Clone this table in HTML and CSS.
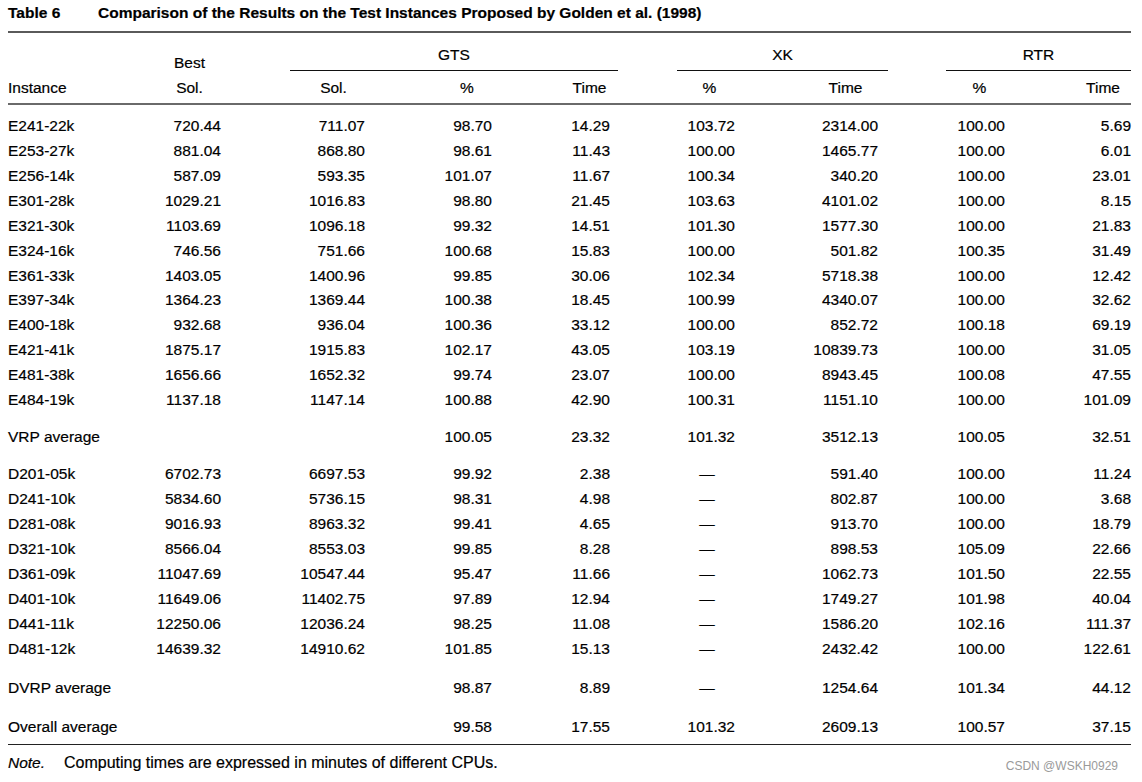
FILE: index.html
```html
<!DOCTYPE html>
<html lang="en">
<head>
<meta charset="utf-8">
<title>Table 6</title>
<link rel="stylesheet" href="styles.css">
</head>
<body>
<div class="page">
  <div class="title">
    <span class="title-label">Table 6</span>
    <span class="title-text">Comparison of the Results on the Test Instances Proposed by Golden et al. (1998)</span>
  </div>
  <div class="rule-top"></div>

  <div class="head">
    <div class="h-inst">Instance</div>
    <div class="h-best c2">Best<br>Sol.</div>
    <div class="group g-gts">GTS</div>
    <div class="group g-xk">XK</div>
    <div class="group g-rtr">RTR</div>
    <div class="sub c3">Sol.</div>
    <div class="sub c4 nudge">%</div>
    <div class="sub c5 nudge">Time</div>
    <div class="sub c6 nudge">%</div>
    <div class="sub c7">Time</div>
    <div class="sub c8 nudge">%</div>
    <div class="sub c9">Time</div>
  </div>
  <div class="rule-mid"></div>

  <div class="section first">
    <div class="row"><span>E241-22k</span><span>720.44</span><span>711.07</span><span>98.70</span><span>14.29</span><span>103.72</span><span>2314.00</span><span>100.00</span><span>5.69</span></div>
    <div class="row"><span>E253-27k</span><span>881.04</span><span>868.80</span><span>98.61</span><span>11.43</span><span>100.00</span><span>1465.77</span><span>100.00</span><span>6.01</span></div>
    <div class="row"><span>E256-14k</span><span>587.09</span><span>593.35</span><span>101.07</span><span>11.67</span><span>100.34</span><span>340.20</span><span>100.00</span><span>23.01</span></div>
    <div class="row"><span>E301-28k</span><span>1029.21</span><span>1016.83</span><span>98.80</span><span>21.45</span><span>103.63</span><span>4101.02</span><span>100.00</span><span>8.15</span></div>
    <div class="row"><span>E321-30k</span><span>1103.69</span><span>1096.18</span><span>99.32</span><span>14.51</span><span>101.30</span><span>1577.30</span><span>100.00</span><span>21.83</span></div>
    <div class="row"><span>E324-16k</span><span>746.56</span><span>751.66</span><span>100.68</span><span>15.83</span><span>100.00</span><span>501.82</span><span>100.35</span><span>31.49</span></div>
    <div class="row"><span>E361-33k</span><span>1403.05</span><span>1400.96</span><span>99.85</span><span>30.06</span><span>102.34</span><span>5718.38</span><span>100.00</span><span>12.42</span></div>
    <div class="row"><span>E397-34k</span><span>1364.23</span><span>1369.44</span><span>100.38</span><span>18.45</span><span>100.99</span><span>4340.07</span><span>100.00</span><span>32.62</span></div>
    <div class="row"><span>E400-18k</span><span>932.68</span><span>936.04</span><span>100.36</span><span>33.12</span><span>100.00</span><span>852.72</span><span>100.18</span><span>69.19</span></div>
    <div class="row"><span>E421-41k</span><span>1875.17</span><span>1915.83</span><span>102.17</span><span>43.05</span><span>103.19</span><span>10839.73</span><span>100.00</span><span>31.05</span></div>
    <div class="row"><span>E481-38k</span><span>1656.66</span><span>1652.32</span><span>99.74</span><span>23.07</span><span>100.00</span><span>8943.45</span><span>100.08</span><span>47.55</span></div>
    <div class="row"><span>E484-19k</span><span>1137.18</span><span>1147.14</span><span>100.88</span><span>42.90</span><span>100.31</span><span>1151.10</span><span>100.00</span><span>101.09</span></div>
  </div>

  <div class="section gap-a">
    <div class="row"><span>VRP average</span><span></span><span></span><span>100.05</span><span>23.32</span><span>101.32</span><span>3512.13</span><span>100.05</span><span>32.51</span></div>
  </div>

  <div class="section gap-a">
    <div class="row"><span>D201-05k</span><span>6702.73</span><span>6697.53</span><span>99.92</span><span>2.38</span><span class="dash">—</span><span>591.40</span><span>100.00</span><span>11.24</span></div>
    <div class="row"><span>D241-10k</span><span>5834.60</span><span>5736.15</span><span>98.31</span><span>4.98</span><span class="dash">—</span><span>802.87</span><span>100.00</span><span>3.68</span></div>
    <div class="row"><span>D281-08k</span><span>9016.93</span><span>8963.32</span><span>99.41</span><span>4.65</span><span class="dash">—</span><span>913.70</span><span>100.00</span><span>18.79</span></div>
    <div class="row"><span>D321-10k</span><span>8566.04</span><span>8553.03</span><span>99.85</span><span>8.28</span><span class="dash">—</span><span>898.53</span><span>105.09</span><span>22.66</span></div>
    <div class="row"><span>D361-09k</span><span>11047.69</span><span>10547.44</span><span>95.47</span><span>11.66</span><span class="dash">—</span><span>1062.73</span><span>101.50</span><span>22.55</span></div>
    <div class="row"><span>D401-10k</span><span>11649.06</span><span>11402.75</span><span>97.89</span><span>12.94</span><span class="dash">—</span><span>1749.27</span><span>101.98</span><span>40.04</span></div>
    <div class="row"><span>D441-11k</span><span>12250.06</span><span>12036.24</span><span>98.25</span><span>11.08</span><span class="dash">—</span><span>1586.20</span><span>102.16</span><span>111.37</span></div>
    <div class="row"><span>D481-12k</span><span>14639.32</span><span>14910.62</span><span>101.85</span><span>15.13</span><span class="dash">—</span><span>2432.42</span><span>100.00</span><span>122.61</span></div>
  </div>

  <div class="section gap-b">
    <div class="row"><span>DVRP average</span><span></span><span></span><span>98.87</span><span>8.89</span><span class="dash">—</span><span>1254.64</span><span>101.34</span><span>44.12</span></div>
  </div>

  <div class="section gap-b">
    <div class="row"><span>Overall average</span><span></span><span></span><span>99.58</span><span>17.55</span><span>101.32</span><span>2609.13</span><span>100.57</span><span>37.15</span></div>
  </div>

  <div class="rule-bottom"></div>
  <div class="note">
    <span class="note-label">Note.</span>
    <span class="note-text">Computing times are expressed in minutes of different CPUs.</span>
  </div>
  <div class="watermark">CSDN @WSKH0929</div>
</div>
</body>
</html>
```

FILE: styles.css
```css
html, body {
  margin: 0;
  padding: 0;
  background: #ffffff;
}

.page {
  position: relative;
  width: 1142px;
  height: 782px;
  padding: 1px 11px 0 8px;
  box-sizing: border-box;
  font-family: "Liberation Sans", Arial, sans-serif;
  font-size: 15.5px;
  color: #000000;
  -webkit-text-stroke: 0.2px #000000;
}

.title {
  display: flex;
  line-height: 24.9px;
  font-weight: bold;
  white-space: nowrap;
}

.title-label {
  width: 90px;
  flex: none;
}

.rule-top {
  margin-top: 5px;
  height: 2px;
  background: #5a5a5a;
}

.head,
.row {
  display: grid;
  grid-template-columns: 100px 113px 144px 127px 118px 125px 143px 127px 126px;
}

.head {
  margin-top: 10px;
  grid-template-rows: 27.9px 24.9px;
  row-gap: 4.8px;
  line-height: 24.9px;
  white-space: nowrap;
}

.h-inst {
  grid-column: 1;
  grid-row: 1 / 3;
  align-self: end;
}

.h-best {
  grid-row: 1 / 3;
  align-self: end;
  text-align: center;
}

.group {
  grid-row: 1;
  text-align: center;
  border-bottom: 1px solid #111111;
  padding-bottom: 2px;
}

.g-gts { grid-column: 3 / 6; margin-left: 69px; margin-right: -8px; }
.g-xk { grid-column: 6 / 8; margin-left: 67px; margin-right: -10px; }
.g-rtr { grid-column: 8 / 10; margin-left: 68px; }

.sub {
  grid-row: 2;
  text-align: center;
}

.c2 { grid-column: 2; padding-left: 50px; }
.c3 { grid-column: 3; padding-left: 81px; }
.c4 { grid-column: 4; padding-left: 72px; }
.c5 { grid-column: 5; padding-left: 72px; }
.c6 { grid-column: 6; padding-left: 69px; }
.c7 { grid-column: 7; padding-left: 78px; }
.c8 { grid-column: 8; padding-left: 71px; }
.c9 { grid-column: 9; padding-left: 70px; }

.sub.nudge {
  margin-left: 5px;
}

.rule-mid {
  margin-top: 2.6px;
  height: 2px;
  background: #6a6a6a;
}

.section.first { margin-top: 9px; }
.section.gap-a { margin-top: 12.2px; }
.section.gap-b { margin-top: 14.4px; }

.row {
  line-height: 24.9px;
  white-space: nowrap;
}

.row span {
  text-align: right;
}

.row span:first-child {
  text-align: left;
}

.row span.dash {
  text-align: center;
  padding-left: 69px;
}

.rule-bottom {
  margin-top: 3.9px;
  height: 1px;
  background: #222222;
}

.note {
  display: flex;
  margin-top: 6px;
  line-height: 24.9px;
  white-space: nowrap;
}

.note-label {
  width: 56px;
  flex: none;
  font-style: italic;
}

.note-text {
  font-size: 16px;
}

.watermark {
  position: absolute;
  right: 24px;
  bottom: 4px;
  font-size: 12px;
  line-height: 24px;
  color: #9a9a9a;
  -webkit-text-stroke: 0;
}
```
